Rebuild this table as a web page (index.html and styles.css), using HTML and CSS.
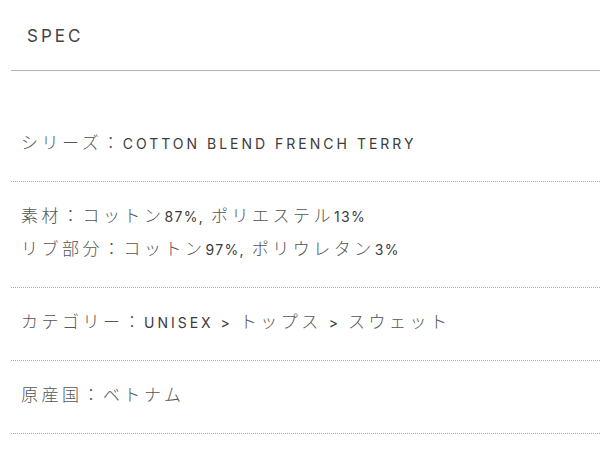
FILE: index.html
```html
<!DOCTYPE html>
<html lang="ja">
<head>
<meta charset="utf-8">
<link rel="stylesheet" href="styles.css">
</head>
<body>
<section class="spec">
  <h2 class="spec-title">SPEC</h2>
  <ul class="spec-list">
    <li class="spec-row"><span class="ja">シリーズ：</span>COTTON BLEND FRENCH TERRY</li>
    <li class="spec-row"><span class="ja">素材：コットン</span><span class="num">87%,</span> <span class="ja">ポリエステル</span><span class="num">13%</span><br><span class="ja">リブ部分：コットン</span><span class="num">97%,</span> <span class="ja">ポリウレタン</span><span class="num">3%</span></li>
    <li class="spec-row"><span class="ja">カテゴリー：</span>UNISEX &gt; <span class="ja">トップス</span> &gt; <span class="ja">スウェット</span></li>
    <li class="spec-row"><span class="ja">原産国：ベトナム</span></li>
  </ul>
</section>
</body>
</html>
```

FILE: styles.css
```css
html, body {
  margin: 0;
  padding: 0;
  background: #fff;
}

.spec {
  margin-left: 11px;
  font-family: "Inter", "Noto Sans CJK JP", sans-serif;
  color: #3c3c3c;
}

.spec-title {
  margin: 0;
  padding: 24px 16px 22px;
  font-size: 17px;
  line-height: 24px;
  font-weight: 400;
  letter-spacing: 3px;
  color: #444;
  border-bottom: 1px solid #b4b4b4;
}

.spec-list {
  list-style: none;
  margin: 38px 0 0;
  padding: 0;
}

.spec-row {
  padding: 18px 10px 21px;
  font-size: 14px;
  font-weight: 400;
  line-height: 33px;
  letter-spacing: 3px;
  border-bottom: 1px dotted #aaa;
  white-space: nowrap;
}

.num {
  letter-spacing: 1.3px;
}

.ja {
  font-family: "Noto Sans CJK JP", sans-serif;
  font-size: 17px;
  line-height: 1;
  letter-spacing: 3.5px;
  font-weight: 300;
  color: #555;
}
```
